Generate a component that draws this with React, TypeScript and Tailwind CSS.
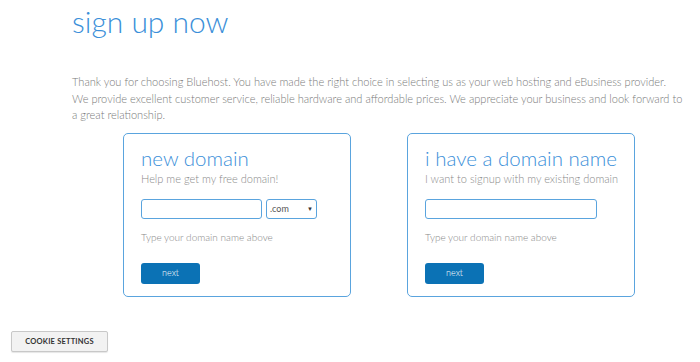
import React from "react"

function DomainCard({
  title,
  subtitle,
  withSelect,
  inputWidth,
}: {
  title: string
  subtitle: string
  withSelect?: boolean
  inputWidth: string
}) {
  return (
    <div className="w-[228px] h-[164px] border border-[#5aa4de] rounded-[5px] pl-[17px] pt-[11px] bg-white">
      <h2 className="text-[20.5px] leading-[26px] font-light text-[#3b8fd9] whitespace-nowrap">{title}</h2>
      <p className="text-[11px] leading-[14px] font-light text-[#8a8a8a] mt-[1px] whitespace-nowrap">{subtitle}</p>
      <div className="flex gap-[4px] mt-[13px]">
        <input
          type="text"
          className={`${inputWidth} h-[20px] border border-[#5aa4de] rounded-[3px] bg-white outline-none`}
        />
        {withSelect && (
          <div className="w-[51px] h-[20px] border border-[#5aa4de] rounded-[3px] flex items-center justify-between px-[3px] text-[9px] text-[#555]">
            <span>.com</span>
            <span className="text-[6px] text-[#333]">▼</span>
          </div>
        )}
      </div>
      <p className="text-[10px] leading-[12px] font-light text-[#888] mt-[12px]">Type your domain name above</p>
      <button className="mt-[20px] w-[59px] h-[21px] bg-[#0b72b5] rounded-[3px] text-white text-[9px] font-light">
        next
      </button>
    </div>
  )
}

export default function App() {
  return (
    <div className="w-[700px] h-[362px] bg-white relative overflow-hidden" style={{ fontFamily: "Lato, 'Open Sans', sans-serif" }}>
      <div className="pl-[72px] pr-[10px]">
        <h1 className="text-[30px] leading-[40px] font-light text-[#3b8fd9] pt-[1px]">sign up now</h1>
        <p className="mt-[33px] text-[11.05px] leading-[16.5px] font-light text-[#7a7a7a] whitespace-nowrap">
          Thank you for choosing Bluehost. You have made the right choice in selecting us as your web hosting and eBusiness provider.
          <br />
          We provide excellent customer service, reliable hardware and affordable prices. We appreciate your business and look forward to
          <br />
          a great relationship.
        </p>
      </div>
      <div className="flex gap-[56px] pl-[123px] mt-[9px]">
        <DomainCard title="new domain" subtitle="Help me get my free domain!" withSelect inputWidth="w-[121px]" />
        <DomainCard title="i have a domain name" subtitle="I want to signup with my existing domain" inputWidth="w-[172px]" />
      </div>
      <button className="absolute left-[11px] top-[331px] w-[97px] h-[21px] bg-[#f2f2f2] border border-[#c8c8c8] rounded-[2px] text-[7.5px] font-bold text-[#333] tracking-[0.2px] shadow-[0_1px_1px_rgba(0,0,0,0.1)]">
        COOKIE SETTINGS
      </button>
    </div>
  )
}
